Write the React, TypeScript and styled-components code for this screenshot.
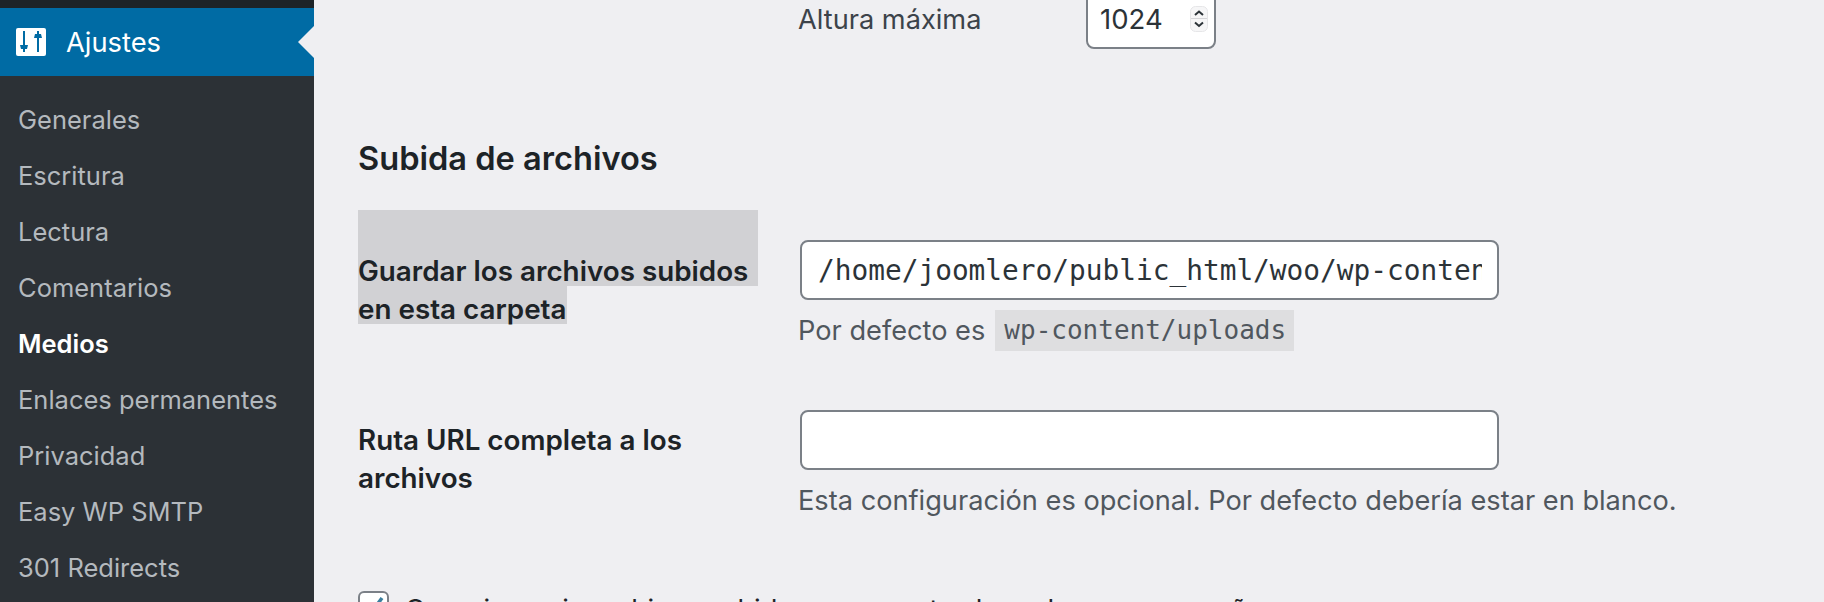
import React from "react";
import styled, { createGlobalStyle } from "styled-components";

const GlobalStyle = createGlobalStyle`
  html, body {
    margin: 0;
    padding: 0;
    height: 602px;
    overflow: hidden;
    background: #efeff2;
  }
  body {
    font-family: Inter, "Liberation Sans", sans-serif;
  }
`;

const Page = styled.div`
  display: flex;
  width: 1824px;
  height: 602px;
  overflow: hidden;
`;

const Sidebar = styled.nav`
  flex: 0 0 314px;
  background: #2c3136;
  padding-top: 8px;
  box-shadow: inset 0 8px 0 #1d2327;
`;

const ActiveItem = styled.div`
  position: relative;
  display: flex;
  align-items: center;
  gap: 20px;
  height: 68px;
  padding-left: 16px;
  background: #006ba4;
  color: #fff;
  font-size: 27.3px;
  &::after {
    content: "";
    position: absolute;
    right: 0;
    top: 18px;
    border: 16px solid transparent;
    border-left-width: 0;
    border-right-color: #efeff2;
  }
`;

const SubMenu = styled.ul`
  list-style: none;
  margin: 0;
  padding: 16px 0 0;
`;

const SubItem = styled.li<{ $current?: boolean }>`
  height: 56px;
  line-height: 56px;
  padding-left: 18px;
  font-size: 25.5px;
  font-weight: ${({ $current }) => ($current ? 600 : 400)};
  color: ${({ $current }) => ($current ? "#fff" : "#b4b9be")};
  white-space: nowrap;
`;

const Main = styled.main`
  flex: 1;
  margin-top: -11px;
  padding-left: 44px;
  color: #1d2327;
`;

const FormRow = styled.div`
  display: grid;
  grid-template-columns: 440px 1fr;
`;

const NumberRow = styled.div`
  display: flex;
  padding-left: 440px;
`;

const PlainLabel = styled.div`
  width: 288px;
  height: 60px;
  line-height: 62px;
  font-size: 27.2px;
  color: #3c434a;
`;

const NumberBox = styled.div`
  display: flex;
  align-items: center;
  justify-content: space-between;
  box-sizing: border-box;
  width: 130px;
  height: 60px;
  padding: 0 6px 0 12px;
  background: #fff;
  border: 2px solid #7b8087;
  border-radius: 8px;
  font-size: 27.5px;
  color: #2c3338;
`;

const Heading = styled.h2`
  margin: 0;
  padding-top: 90px;
  height: 38px;
  line-height: 38px;
  font-size: 32.6px;
  font-weight: 600;
`;

const LabelCell = styled.div`
  max-width: 400px;
  font-size: 27.8px;
  font-weight: 600;
  line-height: 38px;
`;

const SelectionGap = styled.div`
  width: 400px;
  height: 38px;
  background: #d1d1d4;
`;

const SelectedLine = styled.div<{ $width: number }>`
  width: ${({ $width }) => $width}px;
  height: 38px;
  line-height: 46px;
  background: #d1d1d4;
  white-space: nowrap;
`;

const SelectedRow = styled(FormRow)`
  margin-top: 33px;
`;

const FieldCell = styled.div<{ $top: number }>`
  padding-top: ${({ $top }) => $top}px;
`;

const TextField = styled.input`
  display: block;
  box-sizing: border-box;
  width: 699px;
  height: 60px;
  margin: 0 0 0 2px;
  padding: 0 15px 0 16px;
  background: #fff;
  border: 2px solid #7b8087;
  border-radius: 8px;
  outline: none;
  font-family: "DejaVu Sans Mono", "Liberation Mono", monospace;
  font-size: 27.8px;
  line-height: 40px;
  color: #2c3338;
`;

const Description = styled.p`
  display: flex;
  align-items: center;
  height: 42px;
  margin: 9px 0 0;
  font-size: 27.2px;
  color: #50575e;
  white-space: nowrap;
`;

const Code = styled.code`
  margin-left: 10px;
  padding: 0 8px 0 9px;
  line-height: 41px;
  background: #dedee0;
  font-family: "DejaVu Sans Mono", "Liberation Mono", monospace;
  font-size: 26px;
`;

const UrlRow = styled(FormRow)`
  margin-top: 59px;
`;

const PlainLabelCell = styled(LabelCell)`
  padding-top: 11px;
`;

const CheckRow = styled.div`
  display: flex;
  align-items: flex-start;
  gap: 16px;
  margin-top: 70px;
  font-size: 27.2px;
  line-height: 38px;
  color: #1d2327;
  white-space: nowrap;
`;

const CheckBox = styled.span`
  display: flex;
  align-items: center;
  justify-content: center;
  flex: 0 0 auto;
  box-sizing: border-box;
  width: 31px;
  height: 31px;
  background: #fff;
  border: 2px solid #7b8087;
  border-radius: 6px;
`;

const SettingsIcon = () => (
  <svg width="30" height="28" viewBox="0 0 30 28">
    <rect width="30" height="28" rx="2" fill="#fff" />
    <path d="M8 3v21M22 3v21" stroke="#006ba4" strokeWidth="2" fill="none" />
    <path d="M4 17h8l-1 4H5zM18 10h8l-1-4h-6z" fill="#006ba4" />
  </svg>
);

const Spinner = () => (
  <svg width="18" height="26" viewBox="0 0 18 26">
    <rect x="0.5" y="0.5" width="17" height="25" rx="5" fill="#f6f6f7" stroke="#e6e6e8" />
    <path d="M1 12.5h16" stroke="#d5d5d8" strokeWidth="1" />
    <path d="M5 9l4-3.500 4 3.500M5 16.500l4 3.500 4-3.500" stroke="#2c3338" strokeWidth="2" fill="none" />
  </svg>
);

const CheckMark = () => (
  <svg width="27" height="27" viewBox="0 0 27 27">
    <path d="M5 13l6 7L22 5" stroke="#3b7f9e" strokeWidth="3.500" fill="none" />
  </svg>
);

const menuItems = [
  "Generales",
  "Escritura",
  "Lectura",
  "Comentarios",
  "Medios",
  "Enlaces permanentes",
  "Privacidad",
  "Easy WP SMTP",
  "301 Redirects",
];

const App = () => (
  <Page>
    <GlobalStyle />
    <Sidebar>
      <ActiveItem>
        <SettingsIcon />
        Ajustes
      </ActiveItem>
      <SubMenu>
        {menuItems.map((item) => (
          <SubItem key={item} $current={item === "Medios"}>
            {item}
          </SubItem>
        ))}
      </SubMenu>
    </Sidebar>
    <Main>
      <NumberRow>
        <PlainLabel>Altura máxima</PlainLabel>
        <NumberBox>
          1024
          <Spinner />
        </NumberBox>
      </NumberRow>
      <Heading>Subida de archivos</Heading>
      <SelectedRow>
        <LabelCell>
          <SelectionGap />
          <SelectedLine $width={400}>Guardar los archivos subidos</SelectedLine>
          <SelectedLine $width={209}>en esta carpeta</SelectedLine>
        </LabelCell>
        <FieldCell $top={30}>
          <TextField
            readOnly
            value="/home/joomlero/public_html/woo/wp-content/uploads"
          />
          <Description>
            Por defecto es <Code>wp-content/uploads</Code>
          </Description>
        </FieldCell>
      </SelectedRow>
      <UrlRow>
        <PlainLabelCell>Ruta URL completa a los archivos</PlainLabelCell>
        <FieldCell $top={0}>
          <TextField readOnly value="" />
          <Description>
            Esta configuración es opcional. Por defecto debería estar en blanco.
          </Description>
        </FieldCell>
      </UrlRow>
      <CheckRow>
        <CheckBox>
          <CheckMark />
        </CheckBox>
        Organizar mis archivos subidos en carpetas basadas en mes y año
      </CheckRow>
    </Main>
  </Page>
);

export default App;
